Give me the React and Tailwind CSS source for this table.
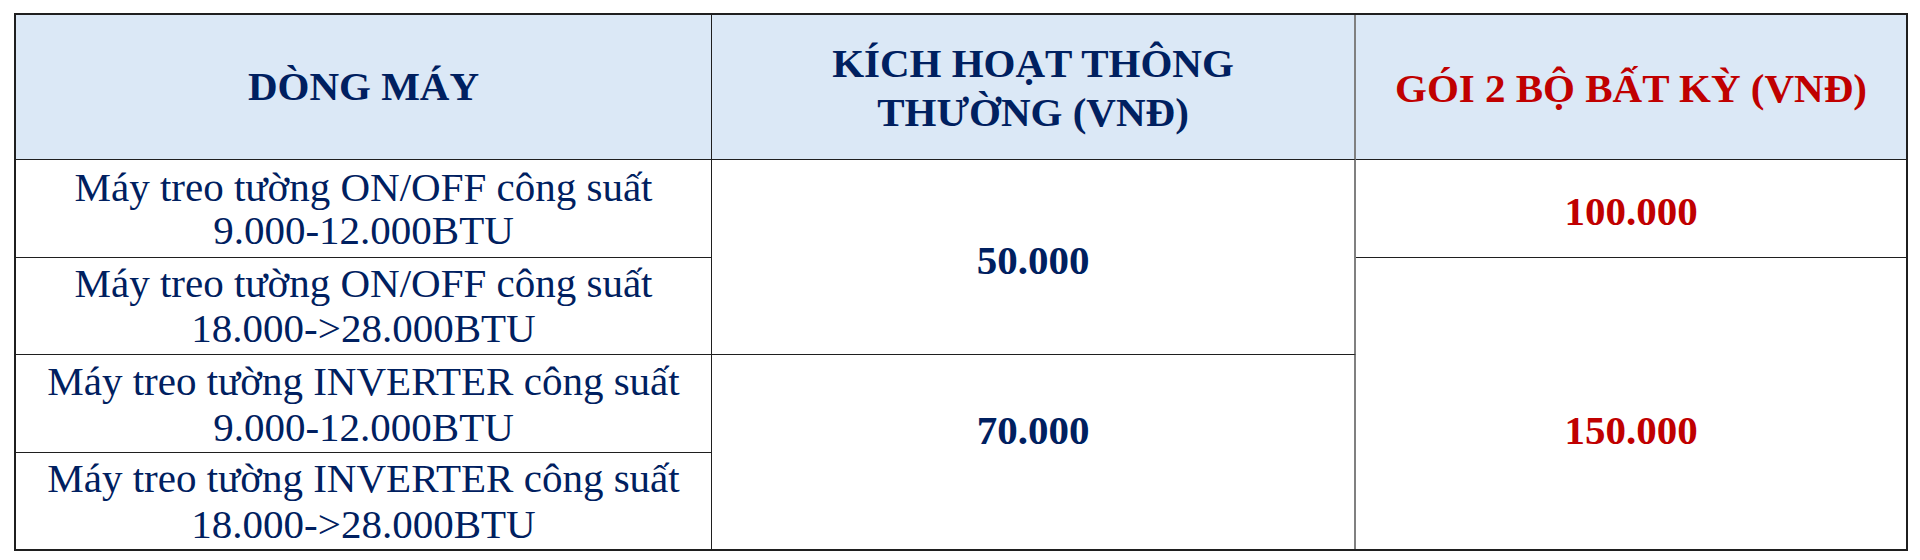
import React from "react";

const models = [
  { name: "Máy treo tường ON/OFF công suất", range: "9.000-12.000BTU", cls: "row-start-2 border-b leading-[43px]" },
  { name: "Máy treo tường ON/OFF công suất", range: "18.000->28.000BTU", cls: "row-start-3 border-b leading-[45px]" },
  { name: "Máy treo tường INVERTER công suất", range: "9.000-12.000BTU", cls: "row-start-4 border-b leading-[46px]" },
  { name: "Máy treo tường INVERTER công suất", range: "18.000->28.000BTU", cls: "row-start-5 leading-[46px]" },
];

const App = () => {
  return (
    <div className="min-h-[560px] bg-white pl-[14px] pt-[13px]">
      <div className="grid w-[1894px] grid-cols-[696px_644px_550px] grid-rows-[145px_98px_97px_98px_96px] border-2 border-[#1f1f1f] font-['Liberation_Serif',serif] text-[41px] text-[#002060]">
        {/* header */}
        <div className="col-start-1 row-start-1 flex items-center justify-center border-r border-b border-[#1f1f1f] bg-[#dbe8f6] font-bold">
          DÒNG MÁY
        </div>
        <div className="col-start-2 row-start-1 flex items-center justify-center border-b border-b-[#1f1f1f] border-r-2 border-r-[#808080] bg-[#dbe8f6] pt-[2px] text-center font-bold leading-[49px]">
          KÍCH HOẠT THÔNG
          <br />
          THƯỜNG (VNĐ)
        </div>
        <div className="col-start-3 row-start-1 flex items-center justify-center border-b border-[#1f1f1f] bg-[#dbe8f6] pt-[4px] font-bold text-[#c00000]">
          GÓI 2 BỘ BẤT KỲ (VNĐ)
        </div>

        {/* model names */}
        {models.map((m, i) => (
          <div
            key={i}
            className={
              "col-start-1 flex flex-col items-center justify-center whitespace-nowrap border-r border-[#1f1f1f] " + m.cls
            }
          >
            <span>{m.name}</span>
            <span>{m.range}</span>
          </div>
        ))}

        {/* normal activation */}
        <div className="col-start-2 row-start-2 row-span-2 flex items-center justify-center border-b border-b-[#1f1f1f] border-r-2 border-r-[#808080] pt-[7px] font-bold">
          50.000
        </div>
        <div className="col-start-2 row-start-4 row-span-2 flex items-center justify-center border-r-2 border-r-[#808080] pb-[42px] font-bold">
          70.000
        </div>

        {/* 2-unit package */}
        <div className="col-start-3 row-start-2 flex items-center justify-center border-b border-[#1f1f1f] pt-[6px] font-bold text-[#c00000]">
          100.000
        </div>
        <div className="col-start-3 row-start-3 row-span-3 flex items-center justify-center pt-[54px] font-bold text-[#c00000]">
          150.000
        </div>
      </div>
    </div>
  );
};

export default App;
